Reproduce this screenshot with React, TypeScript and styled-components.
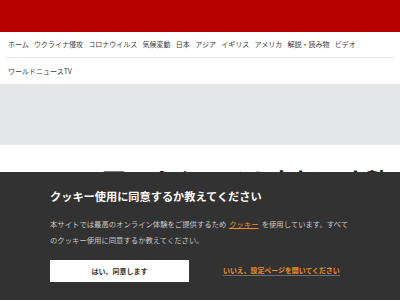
import React from "react";
import styled, { createGlobalStyle } from "styled-components";

const GlobalStyle = createGlobalStyle`
  html, body { margin: 0; padding: 0; background: #ffffff; }
  body { font-family: "Noto Sans CJK JP", "Noto Sans", sans-serif; }
`;

const Page = styled.div`
  width: 400px;
  min-height: 300px;
  overflow: hidden;
`;

const Header = styled.header`
  height: 32px;
  background: #b70000;
`;

const Nav = styled.nav`
  margin: 0 6px;
`;

const NavRow = styled.ul<{ $divided?: boolean }>`
  display: flex;
  align-items: center;
  gap: 5.3px;
  height: 26px;
  margin: 0;
  padding: 0 0 0 2px;
  list-style: none;
  border-bottom: ${(p) => (p.$divided ? "1px solid #e3e3e3" : "none")};
  box-sizing: border-box;
`;

const NavItem = styled.li`
  font-size: 7px;
  line-height: 1;
  color: #3c3c3c;
  white-space: nowrap;
`;

const AdBand = styled.div`
  height: 61px;
  background: #e6e7e9;
`;

const Article = styled.main`
  padding: 20px 10px 0 30px;
`;

const Headline = styled.h1`
  margin: 0;
  font-size: 24px;
  line-height: 32px;
  font-weight: 700;
  color: #111111;
`;

const Banner = styled.section`
  position: fixed;
  left: 0;
  right: 0;
  bottom: 0;
  height: 128px;
  background: #323232;
  padding: 17px 50px 0 50px;
  box-sizing: border-box;
`;

const BannerTitle = styled.h2`
  margin: 0;
  font-size: 11.2px;
  line-height: 14px;
  font-weight: 700;
  color: #ffffff;
  white-space: nowrap;
`;

const BannerText = styled.p`
  margin: 13px 0 0 0;
  font-size: 7.35px;
  line-height: 16px;
  color: #c9c9c9;
  white-space: nowrap;
`;

const InlineLink = styled.a`
  color: #ef8f25;
  text-decoration: underline;
  text-underline-offset: 1px;
  margin: 0 3px;
`;

const Actions = styled.div`
  display: flex;
  align-items: center;
  gap: 34px;
  margin-top: 12px;
`;

const AcceptButton = styled.button`
  width: 139px;
  height: 22px;
  border: none;
  background: #ffffff;
  color: #333333;
  font-family: inherit;
  font-size: 7px;
  font-weight: 700;
  padding: 0;
  cursor: pointer;
`;

const SettingsLink = styled.a`
  color: #ef8f25;
  font-size: 6.9px;
  font-weight: 700;
  line-height: 8px;
  padding-bottom: 1px;
  border-bottom: 1px solid #6e6e6e;
  white-space: nowrap;
  cursor: pointer;
`;

const navItems = [
  "ホーム",
  "ウクライナ侵攻",
  "コロナウイルス",
  "気候変動",
  "日本",
  "アジア",
  "イギリス",
  "アメリカ",
  "解説・読み物",
  "ビデオ",
];

export default function App() {
  return (
    <Page>
      <GlobalStyle />
      <Header />
      <Nav>
        <NavRow $divided>
          {navItems.map((n) => (
            <NavItem key={n}>{n}</NavItem>
          ))}
        </NavRow>
        <NavRow>
          <NavItem>ワールドニュースTV</NavItem>
        </NavRow>
      </Nav>
      <AdBand />
      <Article>
        <Headline>ロシア軍、ウクライナ東部で攻勢</Headline>
      </Article>
      <Banner>
        <BannerTitle>クッキー使用に同意するか教えてください</BannerTitle>
        <BannerText>
          本サイトでは最高のオンライン体験をご提供するため
          <InlineLink>クッキー</InlineLink>
          を使用しています。すべて
          <br />
          のクッキー使用に同意するか教えてください。
        </BannerText>
        <Actions>
          <AcceptButton>はい、同意します</AcceptButton>
          <SettingsLink>いいえ、設定ページを開いてください</SettingsLink>
        </Actions>
      </Banner>
    </Page>
  );
}
